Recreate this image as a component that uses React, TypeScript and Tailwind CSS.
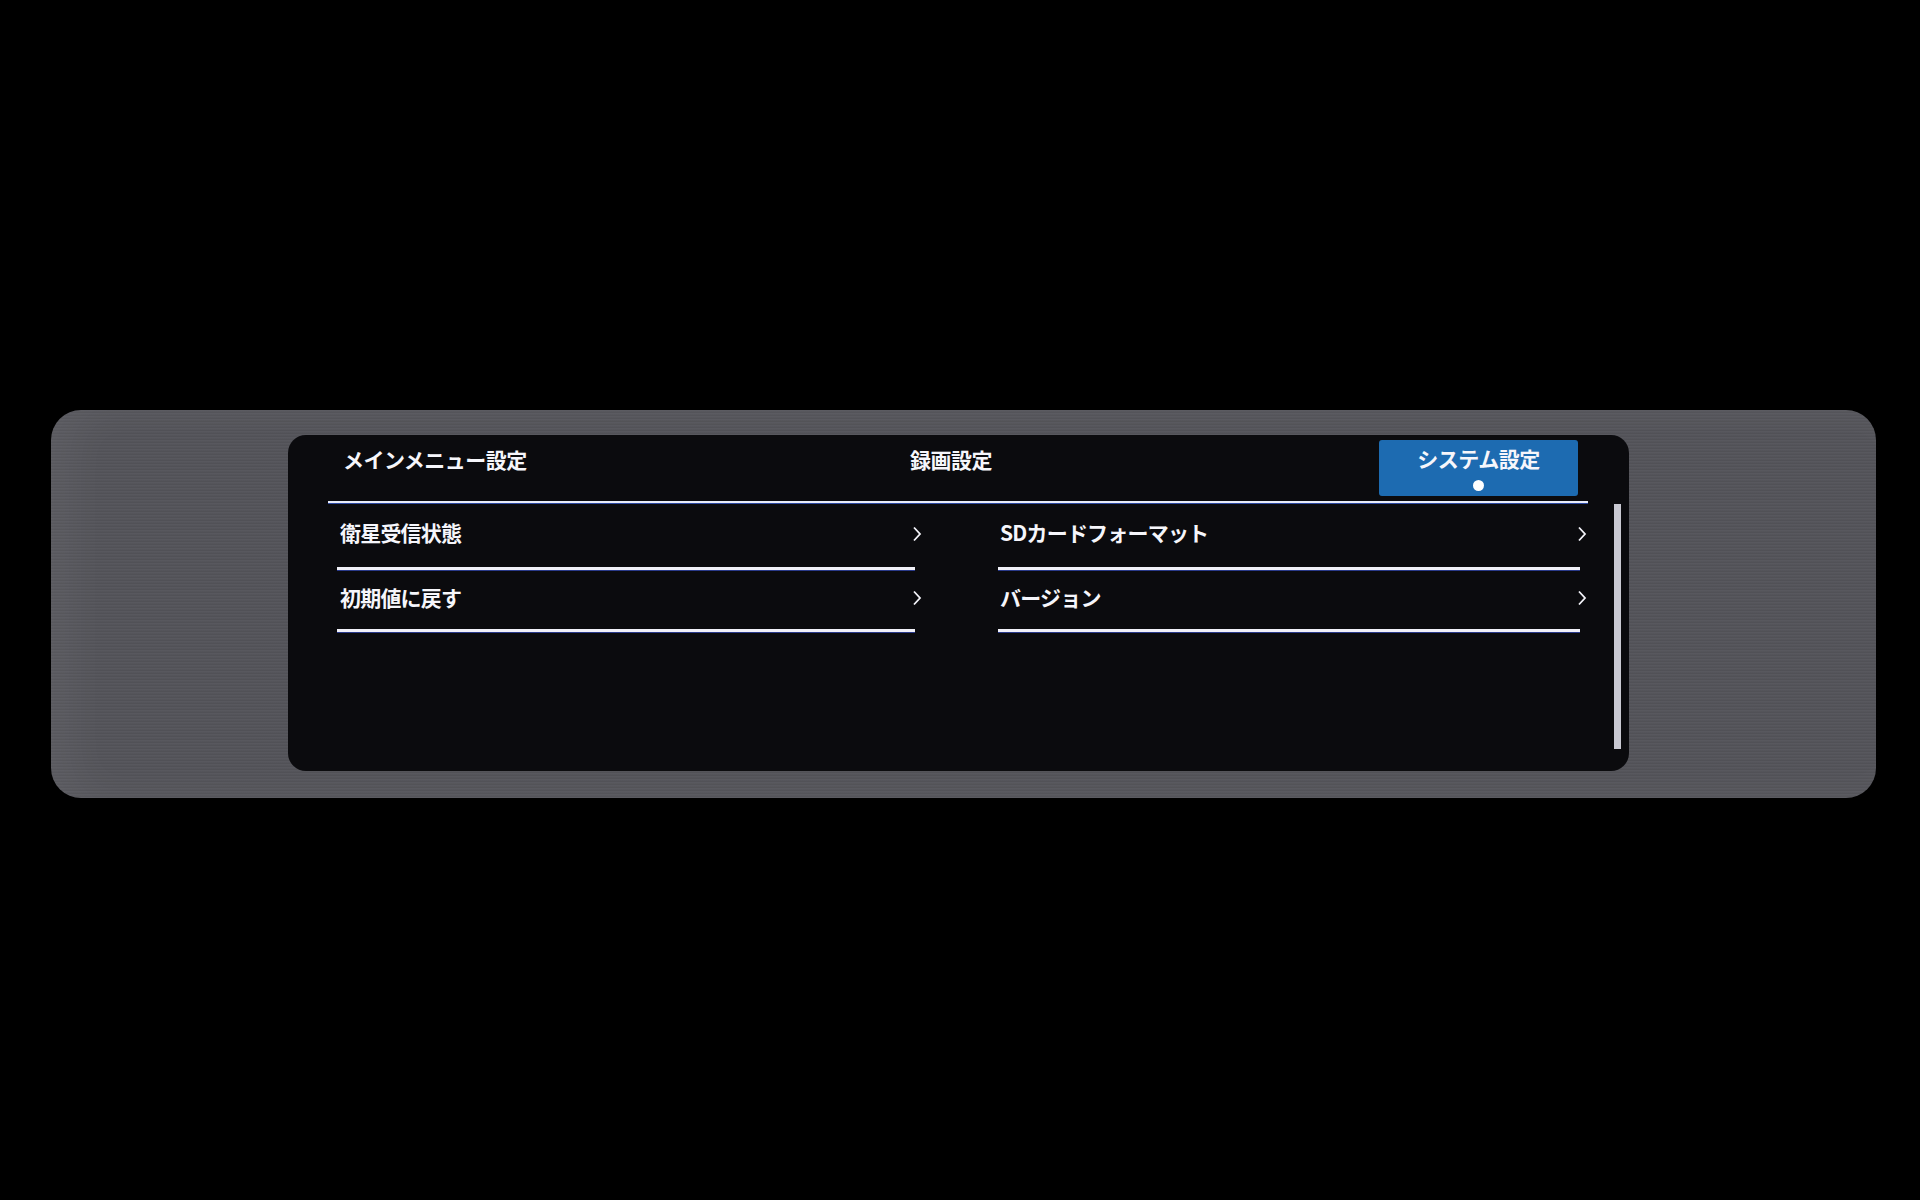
const FONT = "font-['Noto_Sans_CJK_JP','Noto_Sans',sans-serif]";

type Item = { label: string };

const leftItems: Item[] = [{ label: "衛星受信状態" }, { label: "初期値に戻す" }];
const rightItems: Item[] = [{ label: "SDカードフォーマット" }, { label: "バージョン" }];

function Chevron() {
  return (
    <svg width="10" height="16" viewBox="0 0 10 16" className="mr-[-7px] shrink-0">
      <polyline points="2,1.5 8,8 2,14.5" fill="none" stroke="#f4f4fa" strokeWidth="1.8" />
    </svg>
  );
}

function MenuColumn({ items, width, pad }: { items: Item[]; width: string; pad: string }) {
  return (
    <div className={`flex flex-col ${width}`}>
      {items.map((it, i) => (
        <div key={it.label} className="flex flex-col">
          <div className={`flex items-center justify-between ${i === 0 ? "h-[64px]" : "h-[59px]"} ${pad} pb-[3px]`}>
            <span className="pb-[2px] text-[21px] font-bold leading-none tracking-[-0.8px] text-[#f6f6fb]">{it.label}</span>
            <Chevron />
          </div>
          <div className="h-[3px] bg-[#f1f1f8] shadow-[0_1px_0_#2a3a8a]" />
        </div>
      ))}
    </div>
  );
}

export default function App() {
  return (
    <div className={`min-h-[1200px] w-[1920px] bg-black ${FONT}`}>
      <div className="pt-[410px] pl-[51px]">
        <div className="h-[388px] w-[1825px] rounded-[30px] bg-[#55555b] bg-[repeating-linear-gradient(180deg,rgba(255,255,255,0.02)_0px,rgba(255,255,255,0.02)_1px,rgba(0,0,0,0.05)_2px,rgba(0,0,0,0.05)_3px)] pt-[25px] pl-[237px] shadow-[inset_24px_0_40px_rgba(255,255,255,0.05)]">
          <div className="h-[336px] w-[1341px] rounded-[18px] bg-[#0b0b0e] pt-[5px]">
            {/* tabs */}
            <div className="flex h-[56px] items-center">
              <div className="w-[622px] pl-[55px] pb-[18px] text-[21px] font-bold leading-none tracking-[-0.5px] text-[#f6f6fb]">メインメニュー設定</div>
              <div className="w-[469px] pb-[18px] text-[21px] font-bold leading-none tracking-[-0.5px] text-[#f6f6fb]">録画設定</div>
              <div className="flex h-[56px] w-[199px] flex-col items-center rounded-[3px] bg-[#1d6bb1] pt-[5px]">
                <span className="text-[21px] font-bold leading-[26px] tracking-[-0.5px] text-[#f6f6fb]">システム設定</span>
                <span className="mt-[9px] h-[11px] w-[11px] rounded-full bg-white" />
              </div>
            </div>
            <div className="ml-[40px] mt-[5px] h-[2px] w-[1260px] bg-[#e8ecfa] shadow-[0_1px_0_#2c48a0]" />

            <div className="flex items-start">
              <div className="ml-[49px] flex gap-[83px]">
                <MenuColumn items={leftItems} width="w-[578px]" pad="pl-[3px]" />
                <MenuColumn items={rightItems} width="w-[582px]" pad="pl-[2px]" />
              </div>
              <div className="ml-auto mr-[8px] mt-[1px] h-[245px] w-[7px] bg-[#c9c9d2]" />
            </div>
          </div>
        </div>
      </div>
    </div>
  );
}
